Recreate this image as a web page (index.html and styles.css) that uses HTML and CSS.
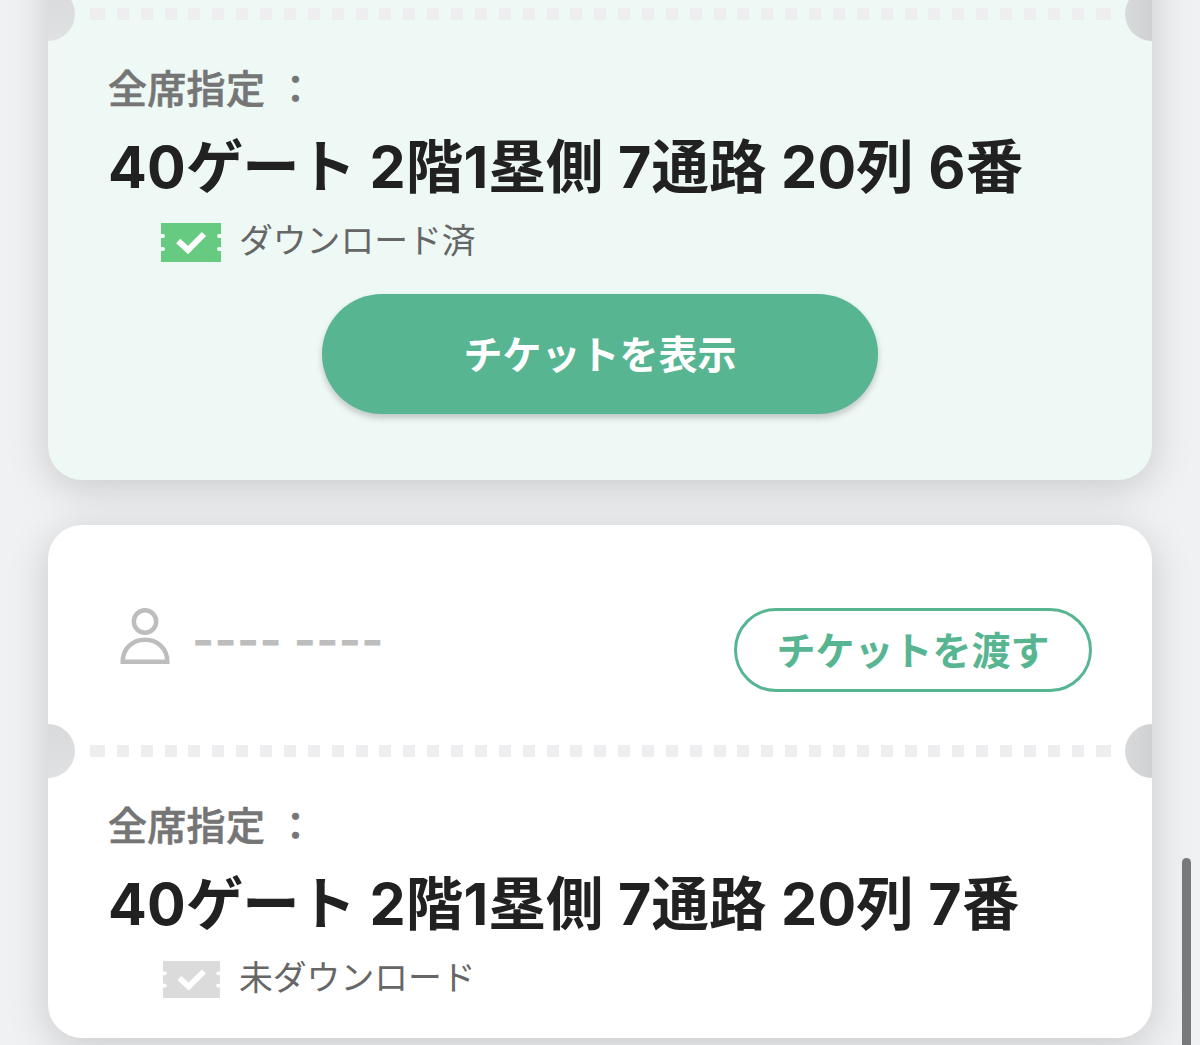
FILE: index.html
```html
<!DOCTYPE html>
<html lang="ja">
<head>
    <meta charset="UTF-8">
    <title>チケット</title>
    <link rel="stylesheet" href="styles.css">
</head>
<body>
    <main class="ticket-list">
        <section class="ticket downloaded">
            <div class="divider"><div class="dots"></div></div>
            <div class="detail">
                <p class="seat-type">全席指定 ：</p>
                <h2 class="seat">40<span class="kana">ゲート</span> 2階1塁側 7通路 20列 6番</h2>
                <div class="status">
                    <svg class="ticket-icon" viewBox="0 0 60 39">
                        <path fill="#66cb80" d="M0 0H60V11H58A2 2 0 0 0 58 15H60V24H58A2 2 0 0 0 58 28H60V39H0V28H2A2 2 0 0 0 2 24H0V15H2A2 2 0 0 0 2 11H0Z"/>
                        <path fill="none" stroke="#fff" stroke-width="6" d="M17.2 18L27 27L43 11"/>
                    </svg>
                    <span>ダウンロード済</span>
                </div>
                <button type="button" class="btn-show">チケットを表示</button>
            </div>
        </section>

        <section class="ticket">
            <div class="owner">
                <svg class="user-icon" viewBox="0 0 50 57">
                    <g fill="none" stroke="#bdbdbd" stroke-width="4.5">
                        <circle cx="25" cy="13.5" r="11.2"/>
                        <path d="M2.7 53.8C2.7 40 13 31.8 25 31.8S47.3 40 47.3 53.8Z"/>
                    </g>
                </svg>
                <span class="owner-name">---- ----</span>
                <button type="button" class="btn-give">チケットを渡す</button>
            </div>
            <div class="divider"><div class="dots"></div></div>
            <div class="detail">
                <p class="seat-type">全席指定 ：</p>
                <h2 class="seat">40<span class="kana">ゲート</span> 2階1塁側 7通路 20列 7番</h2>
                <div class="status">
                    <svg class="ticket-icon small" viewBox="0 0 60 39">
                        <path fill="#dbdbdb" d="M0 0H60V11H58A2 2 0 0 0 58 15H60V24H58A2 2 0 0 0 58 28H60V39H0V28H2A2 2 0 0 0 2 24H0V15H2A2 2 0 0 0 2 11H0Z"/>
                        <path fill="none" stroke="#fff" stroke-width="6" d="M17.2 18L27 27L43 11"/>
                    </svg>
                    <span>未ダウンロード</span>
                </div>
            </div>
        </section>
    </main>
    <div class="scrollbar"></div>
</body>
</html>
```

FILE: styles.css
```css
* {box-sizing: border-box;}
body {margin: 0; height: 1045px; overflow: hidden; background-color: #f0f1f3; font-family: Inter, "Noto Sans CJK JP", sans-serif;}
p, h2 {margin: 0;}
button {padding: 0; font-family: inherit; cursor: pointer;}

.ticket-list {display: flex; flex-direction: column; gap: 45px; margin-top: -73px; padding: 0 48px;}
.ticket {height: 513.5px; border-radius: 34px; background-color: #fff; box-shadow: 0 8px 40px rgba(0, 0, 0, 0.17); overflow: hidden; flex-shrink: 0;}
.downloaded {height: 552.5px; padding-top: 60px; background-color: #eef8f5;}

/* linea perforada */
.divider {display: flex; align-items: center; justify-content: space-between; height: 54px;}
.divider::before, .divider::after {content: ""; width: 27px; height: 54px; background: linear-gradient(#d9dadb, #e0e1e3);}
.divider::before {border-radius: 0 27px 27px 0;}
.divider::after {border-radius: 27px 0 0 27px; background: linear-gradient(to right, #d8d9da, #d0d1d2);}
.dots {width: 1021px; height: 12px; border: solid #eeeef0; border-width: 0 3px; background: repeating-linear-gradient(to right, #eeeef0 0 12px, transparent 12px 23.87px);}

.detail {padding: 0 60px;}
.seat-type {height: 56px; margin-top: 20px; line-height: 56px; font-size: 39px; font-weight: 500; letter-spacing: 0.3px; color: #757575; -webkit-text-stroke: 0.6px #757575;}
.seat {height: 84px; margin-top: 8px; line-height: 84px; font-size: 57.4px; font-weight: 700; letter-spacing: 0.2px; word-spacing: 0.6px; color: #212121; white-space: nowrap;}
.kana {letter-spacing: -1px;}
.status {display: flex; align-items: center; gap: 18px; height: 46px; margin-top: 10px; padding-left: 53px; font-size: 33.8px; color: #666;}
.status span {margin-top: -7px;}
.ticket-icon {width: 60px; height: 39px;}
.ticket-icon.small {width: 57px; height: 37px; margin: 0 1px 0 2px;}
.btn-show {display: block; width: 556px; height: 120px; margin: 29px auto 0; padding-bottom: 4px; border: none; border-radius: 60px; background-color: #58b592; box-shadow: 0 4px 6px rgba(0, 0, 0, 0.2); font-size: 39px; font-weight: 600; color: #fff;}

.owner {display: flex; align-items: center; height: 199.5px; padding: 51px 60px 0 72px;}
.user-icon {width: 50px; height: 57px; margin-top: -27px;}
.owner-name {margin: -21px auto 0 22px; font-size: 47.5px; font-weight: 700; letter-spacing: 0.3px; color: #bdbdbd;}
.btn-give {width: 358px; height: 84px; padding-bottom: 4px; border: 3px solid #58b592; border-radius: 42px; background-color: #fff; font-size: 39px; font-weight: 600; color: #58b592;}

.scrollbar {position: fixed; top: 858px; right: 9px; width: 9px; height: 200px; border-radius: 5px; background-color: #78797a;}
```
